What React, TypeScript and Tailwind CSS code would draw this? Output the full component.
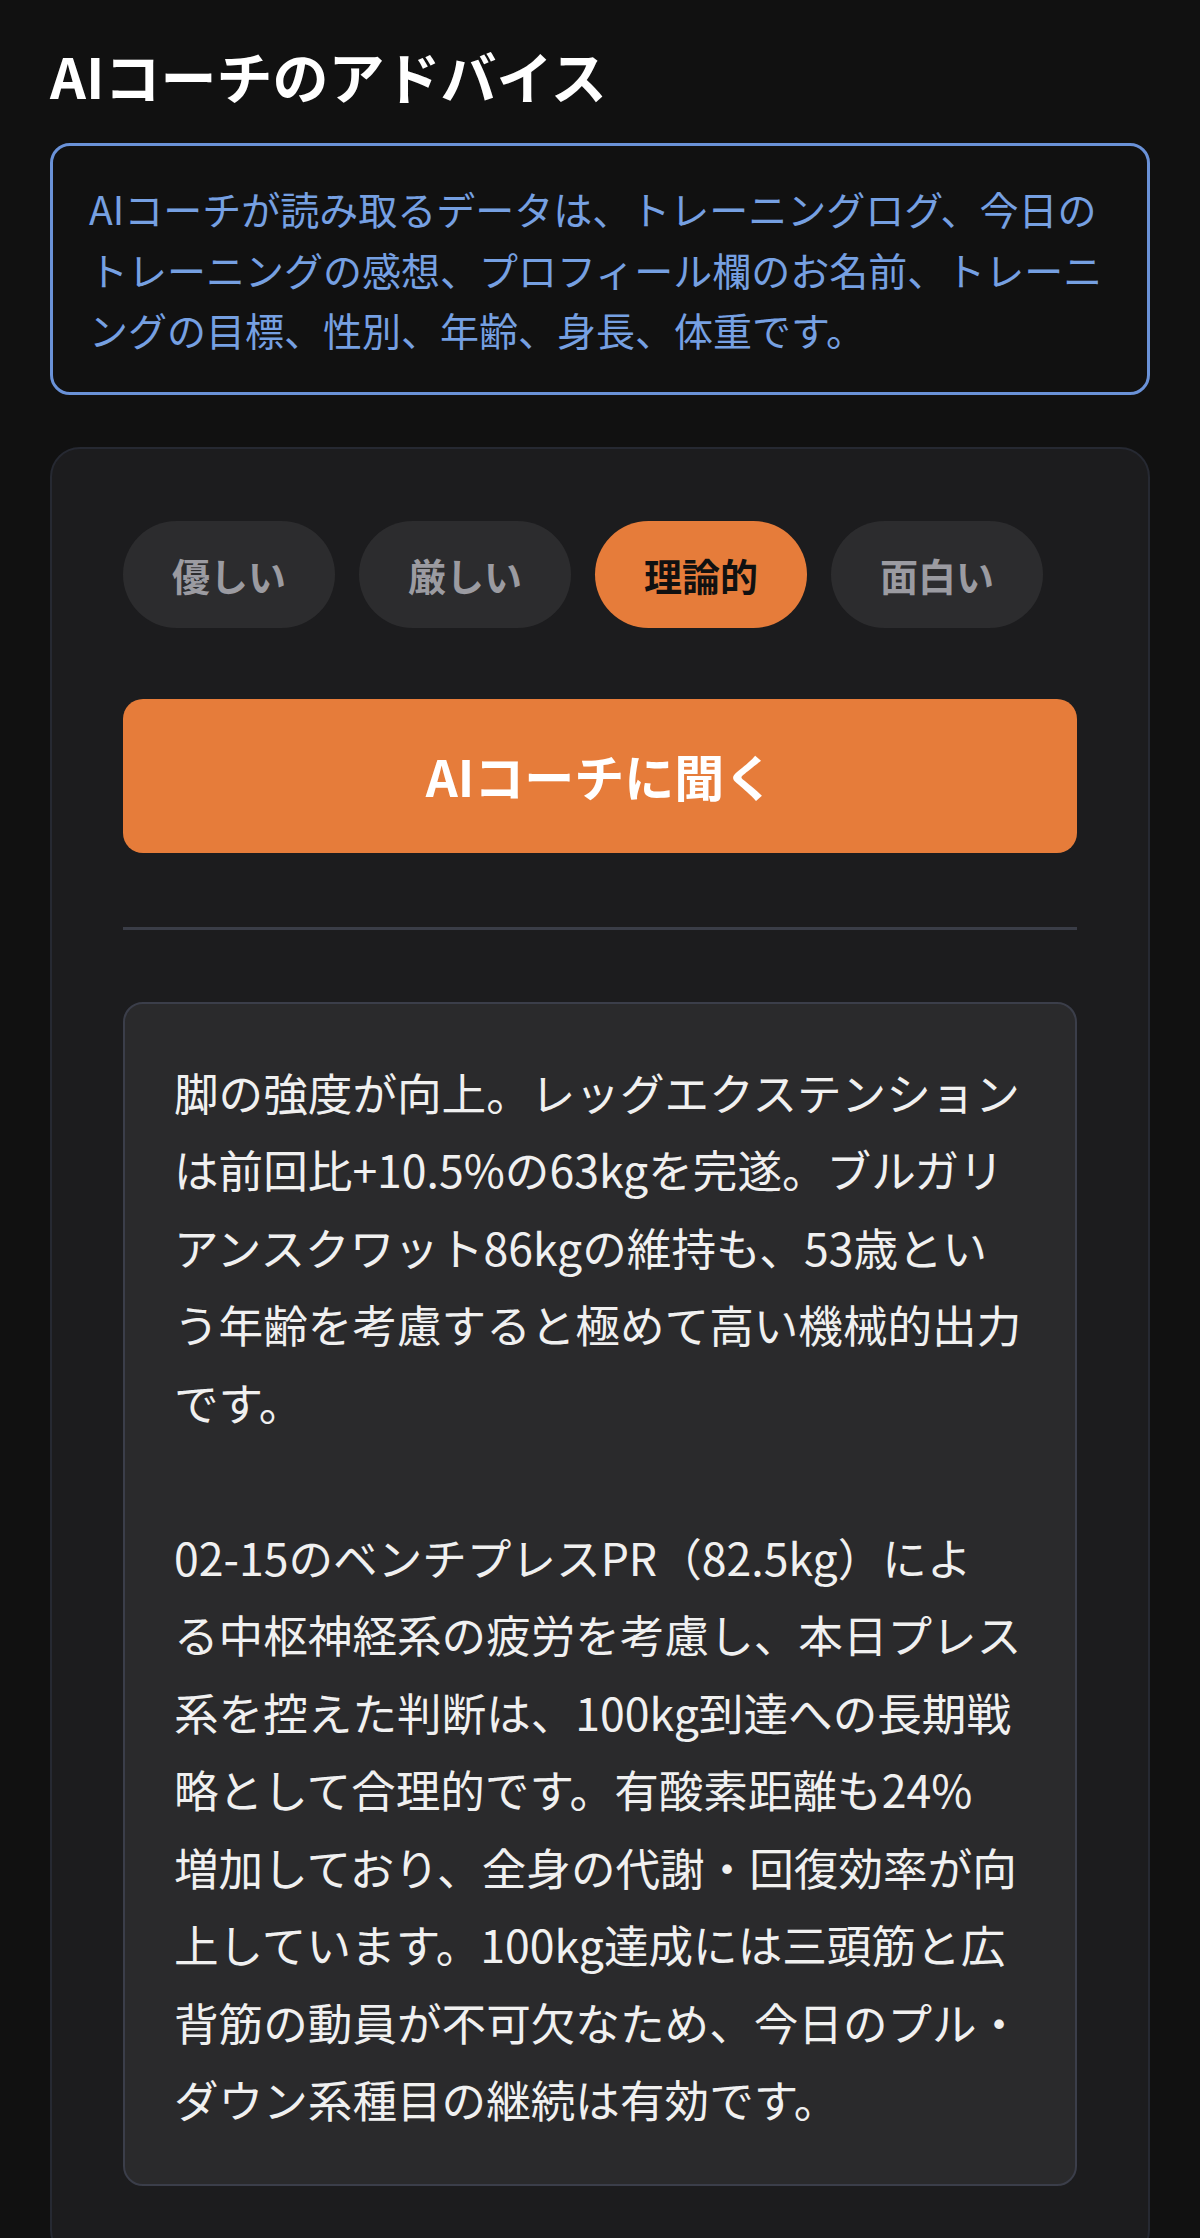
const font = { fontFamily: '"Noto Sans CJK JP", "Noto Sans", sans-serif' };

const infoLines = [
  "AIコーチが読み取るデータは、トレーニングログ、今日の",
  "トレーニングの感想、プロフィール欄のお名前、トレーニ",
  "ングの目標、性別、年齢、身長、体重です。",
];

const adviceLines = [
  "脚の強度が向上。レッグエクステンション",
  "は前回比+10.5%の63kgを完遂。ブルガリ",
  "アンスクワット86kgの維持も、53歳とい",
  "う年齢を考慮すると極めて高い機械的出力",
  "です。",
  "",
  "02-15のベンチプレスPR（82.5kg）によ",
  "る中枢神経系の疲労を考慮し、本日プレス",
  "系を控えた判断は、100kg到達への長期戦",
  "略として合理的です。有酸素距離も24%",
  "増加しており、全身の代謝・回復効率が向",
  "上しています。100kg達成には三頭筋と広",
  "背筋の動員が不可欠なため、今日のプル・",
  "ダウン系種目の継続は有効です。",
];

const tones = ["優しい", "厳しい", "理論的", "面白い"];

export default function App() {
  const selected = "理論的";

  return (
    <div className="min-h-[2238px] bg-[#111111] px-[50px] pt-[41px]" style={font}>
      <h1 className="text-[56px] font-bold leading-[68px] text-white">AIコーチのアドバイス</h1>

      <div className="mt-[34px] rounded-[20px] border-[3px] border-[#6a92d8] px-[36px] py-[32px]">
        {infoLines.map((line) => (
          <div key={line} className="whitespace-nowrap text-[39px] leading-[60.5px] text-[#76a0e2]">
            {line}
          </div>
        ))}
      </div>

      <section className="mt-[52px] rounded-[30px] border-2 border-[#262932] bg-[#1c1c1e] px-[71px] pb-[72px] pt-[72px]">
        <div className="flex gap-[24px]">
          {tones.map((t) => (
            <button
              key={t}
              className={
                t === selected
                  ? "flex h-[107px] w-[212px] items-center justify-center rounded-full bg-[#e67c3a] text-[38px] font-bold text-[#111111]"
                  : "flex h-[107px] w-[212px] items-center justify-center rounded-full bg-[#2c2c2e] text-[38px] font-semibold text-[#9b9ba1]"
              }
            >
              {t}
            </button>
          ))}
        </div>

        <button className="mt-[71px] flex h-[154px] w-full items-center justify-center rounded-[20px] bg-[#e67c3a] text-[50px] font-bold text-white">
          AIコーチに聞く
        </button>

        <div className="mt-[74px] h-[3px] bg-[#3a3d47]" />

        <div className="mt-[72px] rounded-[20px] border-2 border-[#3b3e4a] bg-[#2a2a2c] px-[49px] pb-[46px] pt-[49px]">
          {adviceLines.map((line, i) => (
            <div key={i} className="whitespace-nowrap text-[44.6px] leading-[77.5px] text-[#f0f0f0]">
              {line || "\u00a0"}
            </div>
          ))}
        </div>
      </section>
    </div>
  );
}
